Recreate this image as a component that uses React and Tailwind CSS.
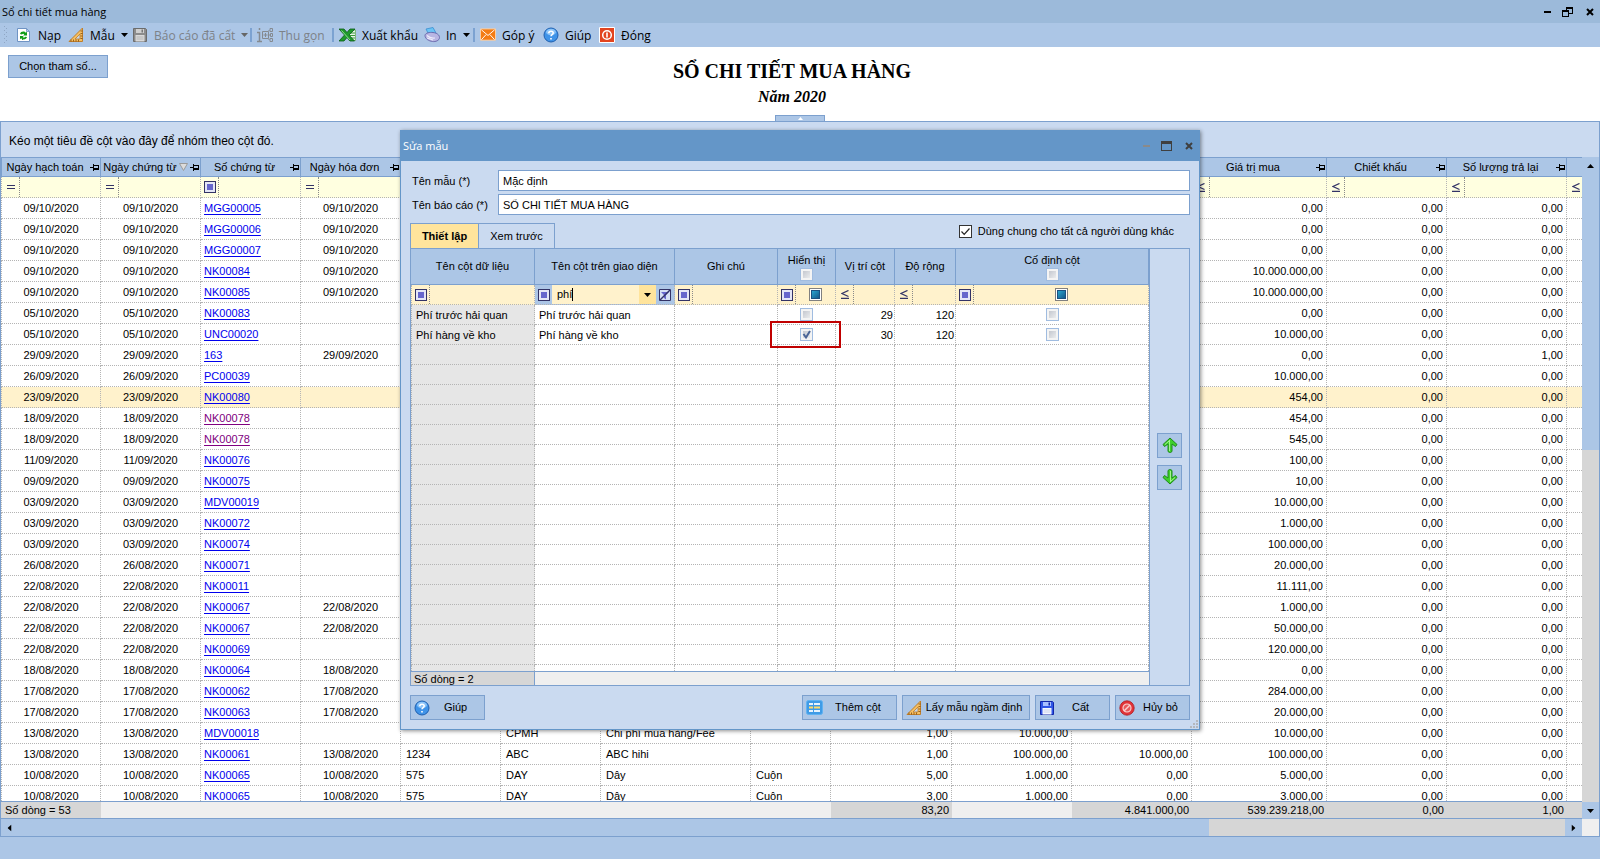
import React, { useState } from 'react';

const COLUMNS = [
  { label: 'Ngày hạch toán', op: '=', width: 'w-[100px]' },
  { label: 'Ngày chứng từ', op: '=', width: 'w-[100px]', sorted: true },
  { label: 'Số chứng từ', op: 'box', width: 'w-[100px]' },
  { label: 'Ngày hóa đơn', op: '=', width: 'w-[100px]' },
  { label: 'Số hóa đơn', op: 'box', width: 'w-[100px]' },
  { label: 'Mã hàng', op: 'box', width: 'w-[100px]' },
  { label: 'Tên hàng', op: 'box', width: 'w-[150px]' },
  { label: 'ĐVT', op: 'box', width: 'w-[80px]' },
  { label: 'Số lượng mua', op: '≤', width: 'w-[121px]' },
  { label: 'Đơn giá', op: '≤', width: 'w-[120px]' },
  { label: 'Chi phí', op: '≤', width: 'w-[120px]' },
  { label: 'Giá trị mua', op: '≤', width: 'w-[135px]' },
  { label: 'Chiết khấu', op: '≤', width: 'w-[120px]' },
  { label: 'Số lượng trả lại', op: '≤', width: 'w-[120px]' },
];

const ROWS = [
  { date: '09/10/2020', no: 'MGG00005', inv: true, amount: '0,00' },
  { date: '09/10/2020', no: 'MGG00006', inv: true, amount: '0,00' },
  { date: '09/10/2020', no: 'MGG00007', inv: true, amount: '0,00' },
  { date: '09/10/2020', no: 'NK00084', inv: true, amount: '10.000.000,00' },
  { date: '09/10/2020', no: 'NK00085', inv: true, amount: '10.000.000,00' },
  { date: '05/10/2020', no: 'NK00083', amount: '0,00' },
  { date: '05/10/2020', no: 'UNC00020', amount: '10.000,00' },
  { date: '29/09/2020', no: '163', inv: true, amount: '0,00', returned: '1,00' },
  { date: '26/09/2020', no: 'PC00039', amount: '10.000,00' },
  { date: '23/09/2020', no: 'NK00080', amount: '454,00', active: true },
  { date: '18/09/2020', no: 'NK00078', amount: '454,00', visited: true },
  { date: '18/09/2020', no: 'NK00078', amount: '545,00', visited: true },
  { date: '11/09/2020', no: 'NK00076', amount: '100,00' },
  { date: '09/09/2020', no: 'NK00075', amount: '10,00' },
  { date: '03/09/2020', no: 'MDV00019', amount: '10.000,00' },
  { date: '03/09/2020', no: 'NK00072', amount: '1.000,00' },
  { date: '03/09/2020', no: 'NK00074', amount: '100.000,00' },
  { date: '26/08/2020', no: 'NK00071', amount: '20.000,00' },
  { date: '22/08/2020', no: 'NK00011', amount: '11.111,00' },
  { date: '22/08/2020', no: 'NK00067', inv: true, amount: '1.000,00' },
  { date: '22/08/2020', no: 'NK00067', inv: true, amount: '50.000,00' },
  { date: '22/08/2020', no: 'NK00069', amount: '120.000,00' },
  { date: '18/08/2020', no: 'NK00064', inv: true, amount: '0,00' },
  { date: '17/08/2020', no: 'NK00062', inv: true, amount: '284.000,00' },
  { date: '17/08/2020', no: 'NK00063', inv: true, amount: '20.000,00' },
  { date: '13/08/2020', no: 'MDV00018', amount: '10.000,00', item: ['', 'CPMH', 'Chi phí mua hàng/Fee', ''], nums: ['1,00', '10.000,00', ''] },
  { date: '13/08/2020', no: 'NK00061', inv: true, amount: '100.000,00', item: ['1234', 'ABC', 'ABC hihi', ''], nums: ['1,00', '100.000,00', '10.000,00'] },
  { date: '10/08/2020', no: 'NK00065', inv: true, amount: '5.000,00', item: ['575', 'DAY', 'Dây', 'Cuộn'], nums: ['5,00', '1.000,00', '0,00'] },
  { date: '10/08/2020', no: 'NK00065', inv: true, amount: '3.000,00', item: ['575', 'DAY', 'Dây', 'Cuộn'], nums: ['3,00', '1.000,00', '0,00'] },
];

const TOTALS = ['Số dòng = 53', '', '', '', '', '', '', '', '83,20', '', '4.841.000,00', '539.239.218,00', '0,00', '1,00'];

const SETUP_COLUMNS = [
  { label: 'Tên cột dữ liệu', width: 'w-[124px]' },
  { label: 'Tên cột trên giao diện', width: 'w-[140px]' },
  { label: 'Ghi chú', width: 'w-[103px]' },
  { label: 'Hiển thị', width: 'w-[58px]', check: true },
  { label: 'Vị trí cột', width: 'w-[59px]' },
  { label: 'Độ rộng', width: 'w-[61px]' },
  { label: 'Cố định cột', width: 'w-[193px]', check: true },
];

const INITIAL_FIELDS = [
  { name: 'Phí trước hải quan', visible: false, position: 29, size: 120, pinned: false },
  { name: 'Phí hàng về kho', visible: true, position: 30, size: 120, pinned: false },
];

const EMPTY_ROWS = Array.from({ length: 17 });

/* ---------- icons ---------- */

const RefreshIcon = () => (
  <svg width="16" height="16" viewBox="0 0 16 16" className="shrink-0">
    <path d="M1.500 1.500h9l3 3v10h-12z" fill="#fff" stroke="#6f93c4" />
    <path d="M10.500 1.500v3h3z" fill="#b9cfeb" stroke="#6f93c4" strokeWidth=".8" />
    <path d="M4 7c.5-2.800 4.500-3.200 5.800-1.300L11 4.800V8.500H7.200l1.100-1.200C7.600 6.400 6.300 6.500 6 7.500z" fill="#0f9d18" />
    <path d="M11 10c-.5 2.800-4.500 3.200-5.800 1.300L4 12.200V9h3.800l-1.100 1c.7.900 2 .8 2.300-.3z" fill="#0f9d18" />
  </svg>
);

const RulerIcon = () => (
  <svg width="16" height="16" viewBox="0 0 16 16" className="shrink-0">
    <path d="M1 14.500 14.500 1v13.500z" fill="#f5bf62" stroke="#c07f2a" />
    <path d="M7 12 12 7v5z" fill="#c6d6ea" stroke="#c07f2a" strokeWidth=".8" />
    <path d="M3 14.500v-2M5.500 14.500v-2M8 14.500v-2M10.500 14.500v-2M14.500 4h-2M14.500 6.500h-2M14.500 9h-2M14.500 11.500h-2" stroke="#7d4a0c" strokeWidth=".8" />
  </svg>
);

const SaveIcon = ({ muted }) => (
  <svg width="16" height="16" viewBox="0 0 16 16" className="shrink-0">
    <path d="M1.500 1.500h12l1 1v12h-13z" fill={muted ? '#8b8b8b' : '#2f55e6'} stroke={muted ? '#6c6c6c' : '#1226a8'} />
    <path d="M4 2h8v4H4z" fill={muted ? '#cfcfcf' : '#a9c0ff'} />
    <path d="M9.500 2.500H11v3H9.500z" fill={muted ? '#777' : '#1226a8'} />
    <path d="M3.500 8h9v6.500h-9z" fill={muted ? '#d9d9d9' : '#f5f7ff'} />
    <path d="M4.500 10h7M4.500 12h7" stroke={muted ? '#b5b5b5' : '#c9d2ea'} />
  </svg>
);

const CollapseIcon = () => (
  <svg width="16" height="16" viewBox="0 0 16 16" className="shrink-0" fill="none" stroke="#858a90">
    <path d="M0 5.500h2.500V14M0 14.500h5M2.500 1v2" strokeWidth="1.500" />
    <path d="M5.500 4.500h6v7h-6zM8.500 6v4M6.500 8h4M11.500 3.500h1M11.500 8h2M11.500 12.500h1" />
    <path d="M13 1.500h2.500v3H13zM13.500 6.500h2v3h-2zM13 11.500h2.500v3H13z" />
  </svg>
);

const ExcelIcon = () => (
  <svg width="17" height="16" viewBox="0 0 17 16" className="shrink-0">
    <path d="M10 3h6.500v10.500H10z" fill="#e9f5e6" stroke="#7cb37a" />
    <path d="M11 6h5M11 8.500h5M11 11h5" stroke="#3b9a3b" />
    <path d="M0 2h5l3 3.500L11 2h5l-6 6 5.500 6H11l-3-3.500L5 14H0l5.500-6z" fill="#1f9a2c" stroke="#0b5c17" strokeWidth=".8" />
    <path d="m2.500 3.500 8.500 9.500" stroke="#8ce08b" />
  </svg>
);

const PrinterIcon = () => (
  <svg width="16" height="16" viewBox="0 0 16 16" className="shrink-0">
    <path d="m2 2 7-1.500L12 6 5 8z" fill="#6cc4f5" stroke="#3a8fd0" strokeWidth=".8" />
    <path d="M1 8.500C1 6 6 5 9 5.500c4 .5 6.500 2.500 6.500 5 0 3-4 4.500-7 4C5 14 1 12 1 8.500z" fill="#b9b6e3" stroke="#6562a8" strokeWidth=".9" />
    <path d="M3 8.500c2 2 5 3 8 2.500M3 11l6 2" stroke="#ecebfa" strokeWidth="1.200" fill="none" />
  </svg>
);

const MailIcon = () => (
  <svg width="16" height="14" viewBox="0 0 17 14" className="shrink-0">
    <path d="M.5.500h16v12H.5z" fill="#f47c14" stroke="#fbd3ab" />
    <path d="m1.500 1.500 7 6 7-6M1.500 12l5-5.500M15.500 12l-5-5.500" fill="none" stroke="#fff" />
  </svg>
);

const HelpIcon = () => (
  <svg width="16" height="16" viewBox="0 0 16 16" className="shrink-0">
    <circle cx="8" cy="8" r="7" fill="#3f93e8" stroke="#1f5faf" />
    <ellipse cx="8" cy="5" rx="5" ry="3.300" fill="#8cc4f8" />
    <path d="M5.800 6.200C5.800 3.500 10.300 3.700 10.200 6c0 1.500-2.200 1.600-2.200 3.300M8 11v1.500" fill="none" stroke="#fff" strokeWidth="1.600" />
  </svg>
);

const PowerIcon = () => (
  <svg width="16" height="16" viewBox="0 0 16 16" className="shrink-0">
    <path d="M.5.500h15v15H.5z" fill="#e2441f" stroke="#fff" />
    <circle cx="8" cy="8" r="4.300" fill="none" stroke="#fff" strokeWidth="1.500" />
    <path d="M8 5.500v5" stroke="#fff" strokeWidth="1.600" />
  </svg>
);

const AddColumnIcon = () => (
  <svg width="17" height="16" viewBox="0 0 17 16" className="shrink-0">
    <rect x=".5" y=".5" width="16" height="14" rx="2" fill="#3f9be6" stroke="#5fb2f2" />
    <path d="M3 3h4v2H3zM8 3h6v2H8zM3 10h4v2H3zM8 10h6v2H8z" fill="#e6f3fe" />
    <path d="M3 6.500h4v2H3zM8 6.500h6v2H8z" fill="#ffdc6b" />
  </svg>
);

const CancelIcon = () => (
  <svg width="16" height="16" viewBox="0 0 16 16" className="shrink-0">
    <circle cx="8" cy="8" r="7.200" fill="#e23338" stroke="#b01a20" strokeWidth=".8" />
    <circle cx="8" cy="8" r="4" fill="#e8585b" stroke="#f9d0d0" strokeWidth="1.200" />
    <path d="m5 11 6-6" stroke="#f9d0d0" strokeWidth="1.400" />
  </svg>
);

const ArrowIcon = ({ down }) => (
  <svg width="16" height="16" viewBox="0 0 16 16" className={down ? 'rotate-180' : ''}>
    <path d="M8 1 15 7.500 13.500 9.500 10 7v7.500L8.500 15.500h-1L6 14.500V7L2.500 9.500 1 7.500z" fill="#3fd02c" stroke="#1f8a1a" />
    <path d="M7.500 3v11M3 7.500 7 4" stroke="#a5f292" fill="none" />
  </svg>
);

const PinIcon = () => (
  <svg width="9" height="7" viewBox="0 0 9 7" className="shrink-0" fill="none" stroke="#000" shapeRendering="crispEdges">
    <path d="M0 3.500h3M3.500 0v7M4 1.500h4.500v4H4" />
    <path d="M4 4.500h4" />
  </svg>
);

const SortIcon = () => (
  <svg width="9" height="8" viewBox="0 0 9 8" className="shrink-0">
    <path d="M.5.500h8l-4 7z" fill="#dcdcdc" stroke="#9a9a9a" />
  </svg>
);

const Caret = ({ muted }) => (
  <svg width="7" height="4" viewBox="0 0 7 4" className="shrink-0">
    <path d="M0 0h7L3.500 4z" fill={muted ? '#666' : '#000'} />
  </svg>
);

const ClearFilterIcon = () => (
  <svg width="12" height="12" viewBox="0 0 12 12">
    <path d="M.5.500h11v11H.5z" fill="#d6e0f3" stroke="#333366" />
    <path d="M2 3h8L7 6v4.500L5 9V6z" fill="#6666cc" />
    <path d="m1 11 10-10" stroke="#333366" strokeWidth="1.500" />
  </svg>
);

const CloseIcon = ({ color }) => (
  <svg width="8" height="8" viewBox="0 0 8 8">
    <path d="m1 1 6 6M7 1 1 7" stroke={color} strokeWidth="2" />
  </svg>
);

/* ---------- small parts ---------- */

const Operator = ({ op }) => (
  <button type="button" aria-label="Điều kiện lọc" className="flex h-full w-[17px] shrink-0 items-center justify-center text-[#333366]">
    {op === 'box' && (
      <span className="flex size-3 items-center justify-center border border-[#333366] bg-[#e4e6f6]">
        <span className="size-[6px] bg-[#6666cc]" />
      </span>
    )}
    {op === '=' && <span className="h-1 w-2 border-y border-[#333366]" />}
    {op === '≤' && (
      <svg width="8" height="9" viewBox="0 0 8 9" fill="none" stroke="#333366" strokeWidth="1.300">
        <path d="M7.500.500 1 3.500l6.500 3M0 8.500h8" />
      </svg>
    )}
  </button>
);

const GridCheck = ({ label, checked, onChange }) => (
  <span className="inline-grid size-[13px] align-middle">
    <input
      type="checkbox"
      aria-label={label}
      checked={checked}
      onChange={onChange}
      className="col-start-1 row-start-1 size-[13px] appearance-none border border-[#a0bce0] bg-gradient-to-br from-[#b9bec7] to-[#f6f6f6] shadow-[inset_0_0_0_2px_#f4f4f4]"
    />
    {checked && (
      <svg viewBox="0 0 13 13" className="pointer-events-none col-start-1 row-start-1">
        <path d="m3.500 6 2.500 3.500 4-6.500" fill="none" stroke="#4a6496" strokeWidth="2" />
      </svg>
    )}
  </span>
);

const TriState = () => (
  <button type="button" aria-label="Tất cả" className="flex size-[13px] items-center justify-center border border-[#808080] bg-white">
    <span className="size-[9px] border border-[#1c5180] bg-gradient-to-br from-[#2aa5cf] to-[#155a8a]" />
  </button>
);

const ToolItem = ({ icon, label, width, caret, muted }) => (
  <button type="button" className={`flex h-full shrink-0 items-center gap-[6px] text-left ${width} ${muted ? 'text-[#7d8288]' : 'text-black'}`}>
    {icon}
    <span className="whitespace-nowrap">{label}</span>
    {caret && <span className="ml-auto pr-[5px]"><Caret muted={muted} /></span>}
  </button>
);

const Separator = () => <span className="mr-[5px] h-[14px] w-[2px] shrink-0 bg-[#7ca2d1]" />;

const DialogButton = ({ icon, label, width }) => (
  <button type="button" className={`flex h-[25px] items-center border border-[#7ca0ce] bg-[#acc6e6] px-[3px] ${width}`}>
    {icon}
    <span className="flex-1 whitespace-nowrap text-center">{label}</span>
  </button>
);

/* ---------- report grid ---------- */

const cell = 'h-[21px] border-b border-r border-dotted border-[#b4b4b4] overflow-hidden whitespace-nowrap';

const ReportGrid = () => (
  <table className="w-full table-fixed border-separate border-spacing-0">
    <colgroup>
      {COLUMNS.map((c) => <col key={c.label} className={c.width} />)}
      <col />
    </colgroup>
    <thead>
      <tr>
        {COLUMNS.map((c, i) => (
          <th key={c.label} className={`h-5 border-y border-r border-[#7ca0ce] bg-[#acc6e6] p-0 font-normal ${i === 0 ? 'border-l' : ''}`}>
            <div className="flex items-center pr-px">
              <span className="flex-1 whitespace-nowrap text-center">{c.label}</span>
              {c.sorted && <SortIcon />}
              <span className="flex w-[11px] justify-end"><PinIcon /></span>
            </div>
          </th>
        ))}
        <th className="border-y border-[#7ca0ce] bg-[#acc6e6]" />
      </tr>
      <tr>
        {COLUMNS.map((c, i) => (
          <td key={c.label} className={`${cell} bg-[#ffffe0] p-0 ${i === 0 ? 'border-l' : ''}`}>
            <div className="flex h-5">
              <Operator op={c.op} />
              <input aria-label={`Lọc ${c.label}`} className="w-0 flex-1 border-l border-dotted border-[#8a8a8a] bg-transparent px-1 outline-none" />
            </div>
          </td>
        ))}
        <td className="border-b border-dotted border-[#b4b4b4] bg-[#ffffe0] p-0"><Operator op="≤" /></td>
      </tr>
    </thead>
    <tbody>
      {ROWS.map((r, i) => {
        const [invoice, code, name, unit] = r.item || ['', '', '', ''];
        return (
          <tr key={i} className={r.active ? 'bg-[#fff2cc]' : 'bg-white'}>
            <td className={`${cell} border-l p-0 text-center`}>{r.date}</td>
            <td className={`${cell} p-0 text-center`}>{r.date}</td>
            <td className={`${cell} p-0 pl-[3px]`}>
              <a href="#voucher" className={`underline underline-offset-2 ${r.visited ? 'text-[#800080]' : 'text-[#0000ee]'}`}>{r.no}</a>
            </td>
            <td className={`${cell} p-0 text-center`}>{r.inv ? r.date : ''}</td>
            <td className={`${cell} p-0 pl-[5px]`}>{invoice}</td>
            <td className={`${cell} p-0 pl-[5px]`}>{code}</td>
            <td className={`${cell} p-0 pl-[5px]`}>{name}</td>
            <td className={`${cell} p-0 pl-[5px]`}>{unit}</td>
            {(r.nums || ['', '', '']).map((n, k) => (
              <td key={k} className={`${cell} p-0 pr-[3px] text-right`}>{n}</td>
            ))}
            <td className={`${cell} p-0 pr-[3px] text-right`}>{r.amount}</td>
            <td className={`${cell} p-0 pr-[3px] text-right`}>0,00</td>
            <td className={`${cell} p-0 pr-[3px] text-right`}>{r.returned || '0,00'}</td>
            <td className="border-b border-dotted border-[#b4b4b4] p-0" />
          </tr>
        );
      })}
    </tbody>
  </table>
);

const ReportTotals = () => (
  <table className="w-full shrink-0 table-fixed border-separate border-spacing-0 border-y border-[#7ca0ce] bg-[#efefef]">
    <colgroup>
      {COLUMNS.map((c) => <col key={c.label} className={c.width} />)}
      <col />
    </colgroup>
    <tbody>
      <tr>
        {TOTALS.map((t, i) => (
          <td key={i} className={`h-4 whitespace-nowrap p-0 leading-4 ${t ? 'bg-[#d6d6d6]' : ''} ${i === 0 ? 'pl-1' : 'pr-[3px] text-right'}`}>{t}</td>
        ))}
        <td className="bg-[#d6d6d6] p-0" />
      </tr>
    </tbody>
  </table>
);

/* ---------- dialog ---------- */

const setupCell = 'h-5 border-b border-r border-dotted border-[#b4b4b4] p-0 whitespace-nowrap';

const FilterCell = ({ op, label, first, children }) => (
  <td className={`${setupCell} bg-[#fff2cc] ${first ? 'border-l' : ''}`}>
    <div className="flex h-[19px]">
      <Operator op={op} />
      {children ? (
        <div className="flex flex-1 items-center justify-center border-l border-dotted border-[#8a8a8a]">{children}</div>
      ) : (
        <input aria-label={label} className="w-0 flex-1 border-l border-dotted border-[#8a8a8a] bg-transparent px-1 outline-none" />
      )}
    </div>
  </td>
);

const SetupGrid = () => {
  const [fields, setFields] = useState(INITIAL_FIELDS);
  const [search, setSearch] = useState('phí');

  const toggle = (index, key) => {
    setFields(fields.map((f, i) => (i === index ? { ...f, [key]: !f[key] } : f)));
  };

  const toggleAll = (key) => {
    const next = !fields.every((f) => f[key]);
    setFields(fields.map((f) => ({ ...f, [key]: next })));
  };

  return (
    <div className="flex min-w-0 flex-1 flex-col border-r border-[#7ca0ce] bg-white">
      <div className="min-h-0 flex-1 overflow-hidden">
        <table className="w-full table-fixed border-separate border-spacing-0">
          <colgroup>
            {SETUP_COLUMNS.map((c) => <col key={c.label} className={c.width} />)}
          </colgroup>
          <thead>
            <tr>
              {SETUP_COLUMNS.map((c, i) => (
                <th key={c.label} className="h-9 border-b border-r border-[#7ca0ce] bg-[#acc6e6] p-0 font-normal">
                  <div className="flex flex-col items-center">
                    <span className="whitespace-nowrap">{c.label}</span>
                    {c.check && (
                      <GridCheck label={`${c.label} - tất cả`} checked={false} onChange={() => toggleAll(i === 3 ? 'visible' : 'pinned')} />
                    )}
                  </div>
                </th>
              ))}
            </tr>
            <tr>
              <FilterCell op="box" label="Lọc tên cột dữ liệu" first />
              <td className={`${setupCell} bg-[#acc6e6]`}>
                <div className="flex h-[19px]">
                  <Operator op="box" />
                  <div className="flex flex-1 items-center bg-[#fff2cc] pl-[5px]">
                    <input
                      aria-label="Lọc tên cột trên giao diện"
                      value={search}
                      onChange={(e) => setSearch(e.target.value)}
                      className="[field-sizing:content] bg-transparent p-0 outline-none"
                    />
                    <span className="h-[13px] w-px bg-black" />
                  </div>
                  <button type="button" aria-label="Mở danh sách" className="flex w-[17px] items-center justify-center bg-[#ffe49c]"><Caret /></button>
                  <button type="button" aria-label="Xóa lọc" className="flex w-[18px] items-center justify-center"><ClearFilterIcon /></button>
                </div>
              </td>
              <FilterCell op="box" label="Lọc ghi chú" />
              <FilterCell op="box"><TriState /></FilterCell>
              <FilterCell op="≤" label="Lọc vị trí cột" />
              <FilterCell op="≤" label="Lọc độ rộng" />
              <FilterCell op="box"><TriState /></FilterCell>
            </tr>
          </thead>
          <tbody>
            {fields.map((f, i) => (
              <tr key={f.name}>
                <td className={`${setupCell} border-l bg-[#e6e6e6] pl-1 pt-[2px]`}>{f.name}</td>
                <td className={`${setupCell} pl-1 pt-[2px]`}>{f.name}</td>
                <td className={setupCell} />
                <td className={`${setupCell} relative text-center leading-none`}>
                  <GridCheck label={`Hiển thị ${f.name}`} checked={f.visible} onChange={() => toggle(i, 'visible')} />
                  {i === 1 && <span className="pointer-events-none absolute -bottom-1 -left-2 -right-[6px] -top-1 border-2 border-[#c00000]" />}
                </td>
                <td className={`${setupCell} pr-px pt-[2px] text-right`}>{f.position}</td>
                <td className={`${setupCell} pr-px pt-[2px] text-right`}>{f.size}</td>
                <td className={`${setupCell} text-center leading-none`}>
                  <GridCheck label={`Cố định ${f.name}`} checked={f.pinned} onChange={() => toggle(i, 'pinned')} />
                </td>
              </tr>
            ))}
            {EMPTY_ROWS.map((_, i) => (
              <tr key={i}>
                {SETUP_COLUMNS.map((c, k) => (
                  <td key={c.label} className={`${setupCell} ${k === 0 ? 'border-l bg-[#e6e6e6]' : ''}`} />
                ))}
              </tr>
            ))}
          </tbody>
        </table>
      </div>
      <div className="flex h-[14px] shrink-0 border-t border-[#7ca0ce] bg-[#efefef] leading-[15px]">
        <span className="w-[124px] border-r border-[#7ca0ce] bg-[#d6d6d6] pl-[3px]">Số dòng = 2</span>
      </div>
    </div>
  );
};

const EditTemplateDialog = () => {
  const [shared, setShared] = useState(true);

  return (
    <div role="dialog" aria-label="Sửa mẫu" className="absolute inset-x-0 top-[130px] mx-auto flex h-[600px] w-[800px] flex-col border border-t-0 border-[#6496c8] bg-[#cadaf0] shadow-[1px_1px_4px_rgba(0,0,0,0.45)]">
      <div className="flex h-[31px] shrink-0 items-center justify-between bg-[#6496c8] pl-[2px] pr-[6px] font-['Open_Sans','Noto_Sans',sans-serif] text-[11px] text-white">
        <span>Sửa mẫu</span>
        <div className="flex items-center">
          <button type="button" aria-label="Thu nhỏ" className="mr-[11px] h-[2px] w-[7px] bg-[#8a8a8a]" />
          <button type="button" aria-label="Phóng to" className="mr-[13px] h-[10px] w-[11px] border border-t-[3px] border-[#3f3f3f]" />
          <button type="button" aria-label="Đóng cửa sổ"><CloseIcon color="#3f3f3f" /></button>
        </div>
      </div>

      <div className="flex min-h-0 flex-1 flex-col px-[9px] pb-[9px] pt-[9px]">
        <div className="grid grid-cols-[88px_1fr] items-center gap-y-[3px]">
          <label htmlFor="template-name" className="pl-[2px] pt-[2px]">Tên mẫu (*)</label>
          <input id="template-name" defaultValue="Mặc định" className="h-[21px] border border-[#7ca0ce] bg-white px-1 outline-none" />
          <label htmlFor="report-name" className="pl-[2px] pt-[2px]">Tên báo cáo (*)</label>
          <input id="report-name" defaultValue="SỔ CHI TIẾT MUA HÀNG" className="h-[21px] border border-[#7ca0ce] bg-white px-1 outline-none" />
        </div>

        <div className="mt-2 flex h-[25px] shrink-0 items-start justify-between">
          <div className="flex h-full">
            <button type="button" className="w-[69px] border border-b-0 border-[#7ca0ce] bg-[#ffe49c] font-bold">Thiết lập</button>
            <button type="button" className="w-[76px] border border-b-0 border-l-0 border-[#7ca0ce]">Xem trước</button>
          </div>
          <label className="flex items-center gap-[6px] pr-4 pt-px">
            <span className="grid size-[13px]">
              <input
                type="checkbox"
                checked={shared}
                onChange={(e) => setShared(e.target.checked)}
                className="col-start-1 row-start-1 size-[13px] appearance-none border border-[#333] bg-white"
              />
              {shared && (
                <svg viewBox="0 0 13 13" className="pointer-events-none col-start-1 row-start-1">
                  <path d="m2.500 6.500 2.700 2.800 5.300-5.800" fill="none" stroke="#222" strokeWidth="1.200" />
                </svg>
              )}
            </span>
            Dùng chung cho tất cả người dùng khác
          </label>
        </div>

        <div className="flex min-h-0 flex-1 border border-[#7ca0ce]">
          <SetupGrid />
          <div className="flex w-[39px] flex-col items-center justify-center gap-[7px] pb-3">
            <button type="button" aria-label="Lên" className="flex size-[25px] items-center justify-center border border-[#7ca0ce] bg-[#acc6e6]"><ArrowIcon /></button>
            <button type="button" aria-label="Xuống" className="flex size-[25px] items-center justify-center border border-[#7ca0ce] bg-[#acc6e6]"><ArrowIcon down /></button>
          </div>
        </div>

        <div className="mt-[9px] flex shrink-0 justify-between">
          <DialogButton icon={<HelpIcon />} label="Giúp" width="w-[75px]" />
          <div className="flex gap-[5px]">
            <DialogButton icon={<AddColumnIcon />} label="Thêm cột" width="w-[95px]" />
            <DialogButton icon={<RulerIcon />} label="Lấy mẫu ngầm định" width="w-[128px]" />
            <DialogButton icon={<SaveIcon />} label="Cất" width="w-[75px]" />
            <DialogButton icon={<CancelIcon />} label="Hủy bỏ" width="w-[75px]" />
          </div>
        </div>
      </div>

      <svg width="8" height="8" viewBox="0 0 8 8" className="absolute bottom-px right-px" fill="#b5b8bd">
        <path d="M6 0h2v2H6zM3 3h2v2H3zM6 3h2v2H6zM0 6h2v2H0zM3 6h2v2H3zM6 6h2v2H6z" />
      </svg>
    </div>
  );
};

/* ---------- page ---------- */

const App = () => {
  return (
    <div className="relative flex h-screen flex-col overflow-hidden bg-[#acc6e6] font-['Liberation_Sans',Arial,sans-serif] text-[11px] leading-[15px] text-black">
      {/* Title bar */}
      <div className="flex h-[23px] shrink-0 items-center justify-between bg-[#9cbada] pl-[2px] pr-[6px] font-['Open_Sans','Noto_Sans',sans-serif] text-[11px]">
        <span>Sổ chi tiết mua hàng</span>
        <div className="flex items-center">
          <button type="button" aria-label="Thu nhỏ" className="mr-[11px] h-[2px] w-[7px] bg-black" />
          <button type="button" aria-label="Khôi phục" className="mr-[13px]">
            <svg width="11" height="10" viewBox="0 0 11 10" fill="none" stroke="#000" shapeRendering="crispEdges">
              <path d="M4.500 3V.500h6v6H7M4 1.500h7M.5 3.500h6v6h-6zM0 4.500h7" />
            </svg>
          </button>
          <button type="button" aria-label="Đóng cửa sổ"><CloseIcon color="#000" /></button>
        </div>
      </div>

      {/* Toolbar */}
      <div className="flex h-6 shrink-0 items-center pl-1 font-['Open_Sans','Noto_Sans',sans-serif] text-[12px]">
        <svg width="12" height="18" viewBox="0 0 12 18" fill="#8fa6c4" className="shrink-0">
          <path d="M0 0h1v1H0zM2 2h1v1H2zM0 4h1v1H0zM2 6h1v1H2zM0 8h1v1H0zM2 10h1v1H2zM0 12h1v1H0zM2 14h1v1H2zM0 16h1v1H0z" />
        </svg>
        <ToolItem icon={<RefreshIcon />} label="Nạp" width="w-[52px]" />
        <ToolItem icon={<RulerIcon />} label="Mẫu" width="w-[64px]" caret />
        <ToolItem icon={<SaveIcon muted />} label="Báo cáo đã cất" width="w-[118px]" caret muted />
        <Separator />
        <ToolItem icon={<CollapseIcon />} label="Thu gọn" width="w-[75px]" muted />
        <Separator />
        <ToolItem icon={<ExcelIcon />} label="Xuất khẩu" width="w-[85px]" />
        <ToolItem icon={<PrinterIcon />} label="In" width="w-[49px]" caret />
        <Separator />
        <ToolItem icon={<MailIcon />} label="Góp ý" width="w-[63px]" />
        <ToolItem icon={<HelpIcon />} label="Giúp" width="w-[56px]" />
        <ToolItem icon={<PowerIcon />} label="Đóng" width="w-[60px]" />
      </div>

      {/* Report heading */}
      <div className="flex h-[74px] shrink-0 flex-col bg-white">
        <div className="grid flex-1 grid-cols-[100px_1fr_116px] px-2 pt-2">
          <button type="button" className="h-[23px] border border-[#7ca0ce] bg-[#acc6e6]">Chọn tham số...</button>
          <div className="text-center font-['Liberation_Serif',serif] font-bold">
            <h1 className="pt-1 text-[20px] leading-6">SỔ CHI TIẾT MUA HÀNG</h1>
            <p className="text-[16px] italic leading-7">Năm 2020</p>
          </div>
        </div>
        <button type="button" aria-label="Thu gọn tiêu đề" className="mx-auto flex h-[6px] w-[50px] shrink-0 items-center justify-center border border-b-0 border-[#7ca0ce] bg-[#acc6e6]">
          <svg width="5" height="3" viewBox="0 0 5 3"><path d="M0 3h5L2.500 0z" fill="#fff" /></svg>
        </button>
      </div>

      {/* Report grid */}
      <div className="flex min-h-0 flex-1 flex-col border border-[#7ca0ce]">
        <p className="h-[35px] shrink-0 bg-[#cadaf0] pl-2 text-[12px] leading-[38px]">Kéo một tiêu đề cột vào đây để nhóm theo cột đó.</p>
        <div className="flex min-h-0 flex-1">
          <div className="flex min-w-0 flex-1 flex-col">
            <div className="min-h-0 flex-1 overflow-hidden bg-white"><ReportGrid /></div>
            <ReportTotals />
          </div>
          <div className="flex w-[17px] shrink-0 flex-col bg-[#d6d6d6]">
            <button type="button" aria-label="Cuộn lên" className="flex h-[17px] items-center justify-center bg-[#acc6e6]">
              <span className="rotate-180"><Caret /></span>
            </button>
            <div className="flex-1"><div className="h-[44%] bg-[#acc6e6]" /></div>
            <button type="button" aria-label="Cuộn xuống" className="flex h-[17px] items-center justify-center bg-[#acc6e6]"><Caret /></button>
          </div>
        </div>
        <div className="flex h-[17px] shrink-0 bg-[#d6d6d6]">
          <button type="button" aria-label="Cuộn trái" className="flex w-[17px] items-center justify-center bg-[#acc6e6]">
            <span className="rotate-90"><Caret /></span>
          </button>
          <div className="flex-1"><div className="h-full w-[77%] bg-[#acc6e6]" /></div>
          <button type="button" aria-label="Cuộn phải" className="flex w-[17px] items-center justify-center bg-[#acc6e6]">
            <span className="-rotate-90"><Caret /></span>
          </button>
          <span className="w-[17px] bg-[#efefef]" />
        </div>
      </div>
      <div className="h-[22px] shrink-0" />

      <EditTemplateDialog />
    </div>
  );
};

export default App;
